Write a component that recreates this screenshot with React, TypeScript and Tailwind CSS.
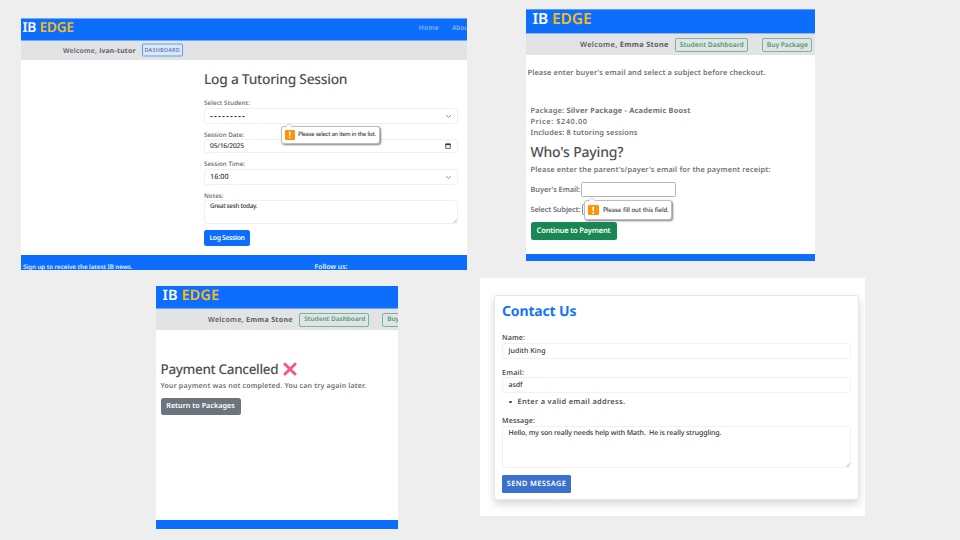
import { useLayoutEffect, useRef, useState, type ReactNode } from "react";

/** One line of text whose tracking is adjusted so that it spans `width` pixels. */
function Line({ width, className = "", children }: { width: number; className?: string; children: ReactNode }) {
  const ref = useRef<HTMLSpanElement>(null);
  const [spacing, setSpacing] = useState(0);
  useLayoutEffect(() => {
    const el = ref.current;
    if (!el) return;
    el.style.letterSpacing = "0px";
    const natural = el.getBoundingClientRect().width;
    const value = (width - natural) / Math.max(1, (el.textContent ?? "").length - 1);
    el.style.letterSpacing = `${value}px`;
    setSpacing(value);
  }, [width]);
  return (
    <span
      ref={ref}
      className={`block shrink-0 whitespace-pre [text-rendering:geometricPrecision] ${className}`}
      style={{ letterSpacing: `${spacing}px` }}
    >
      {children}
    </span>
  );
}

function Brand({ width, className }: { width: number; className: string }) {
  return (
    <Line width={width} className={`font-semibold text-white ${className}`}>
      IB <span className="text-[#f7bb16]">EDGE</span>
    </Line>
  );
}

function Chevron() {
  return (
    <svg viewBox="0 0 16 16" className="h-[5px] w-[5px]" fill="none" stroke="#55595e" strokeWidth="2.4" strokeLinecap="round" strokeLinejoin="round">
      <path d="m2 5 6 6 6-6" />
    </svg>
  );
}

function CalendarIcon() {
  return (
    <svg viewBox="0 0 12 12" className="h-[6px] w-[6px]" fill="none" stroke="#333" strokeWidth="1.5">
      <path d="M1.5 2h9v8.8h-9z" />
      <path d="M1 3h10" strokeWidth="2.6" />
      <path d="M3.5 0v2M8.5 0v2" />
    </svg>
  );
}

function Grip() {
  return (
    <svg viewBox="0 0 6 6" className="h-[4px] w-[4px]" stroke="#a5a5a5" strokeWidth="1">
      <path d="M0.5 5.5l5-5M3.2 5.7l2.5-2.5" />
    </svg>
  );
}

function Hint({ children, className, icon }: { children: ReactNode; className: string; icon: string }) {
  return (
    <div className={`absolute z-10 flex items-center rounded-[3px] border border-[#bdbdbd] bg-white shadow-[1px_1px_2px_rgba(0,0,0,0.5)] ${className}`}>
      <svg viewBox="0 0 8 5" className="absolute -top-[4px] left-[3px] h-[5px] w-[8px]">
        <path d="M0 4.5 4 .5l4 4V5H0z" fill="#fff" />
        <path d="M0 4.4 4 .5l4 3.9" fill="none" stroke="#bdbdbd" strokeWidth=".8" />
      </svg>
      <span className={`flex shrink-0 items-center justify-center rounded-[1px] bg-[#ff9207] ${icon}`}>
        <svg viewBox="0 0 10 10" className="h-full w-full" fill="#fff">
          <path d="M4.1 1.7h1.8L5.6 6H4.4zM4.2 7h1.6v1.5H4.2z" />
        </svg>
      </span>
      {children}
    </div>
  );
}

function SessionPanel() {
  const label = "text-[6.2px] leading-[8px] font-medium text-[#606366]";
  const field = "flex justify-between rounded-[2.5px] border border-[#eff0f1] text-[#303438] font-medium";
  return (
    <section className="mt-[18px] flex h-[252px] w-[446px] shrink-0 flex-col overflow-hidden bg-white">
      <header className="flex h-[23px] shrink-0 border-y border-[#70a8fd] bg-[#0d6efd] pl-[1.5px]">
        <Brand width={51.5} className="text-[13.8px] leading-[17px]" />
        <Line width={20} className="mt-[5px] ml-[345px] text-[6.6px] leading-[8px] font-semibold text-[#83b4fe]">Home</Line>
        <Line width={19} className="mt-[5px] ml-[13px] text-[6.6px] leading-[8px] font-semibold text-[#83b4fe]">About</Line>
      </header>
      <div className="flex h-[19px] shrink-0 items-center bg-[#e1e3e5] pl-[42px]">
        <Line width={72.5} className="text-[6.8px] leading-[10px] font-semibold text-[#5c6064]">
          Welcome, <b className="font-bold">ivan-tutor</b>
        </Line>
        <span className="ml-[6px] flex h-[13px] w-[41px] -translate-y-[0.5px] items-center justify-center rounded-[1.5px] border border-[#55a0fc] bg-[#dfe7f2]">
          <Line width={35.5} className="-translate-y-[0.5px] text-[5.5px] leading-[8px] font-semibold text-[#5f83cc]">DASHBOARD</Line>
        </span>
      </div>
      <main className="flex grow flex-col pr-[9px] pl-[183px]">
        <h1 className="mt-[11px] flex h-[18px] text-[#505050]">
          <Line width={143.5} className="text-[13.8px] leading-[18px] font-medium">Log a Tutoring Session</Line>
        </h1>
        <div className="mt-[10px] flex h-[9px]"><Line width={46} className={label}>Select Student:</Line></div>
        <div className={`relative h-[16px] items-center pr-[6px] pl-[5px] ${field}`}>
          <Line width={35} className="text-[9px] leading-[10px] font-semibold">---------</Line>
          <Chevron />
          <Hint className="top-[17px] left-[76px] h-[18px] w-[99px] pl-[3px]" icon="h-[9.5px] w-[9.5px]">
            <Line width={78} className="ml-[3.5px] font-['Lato',sans-serif] text-[6.1px] leading-[8px] font-medium text-[#333]">Please select an item in the list.</Line>
          </Hint>
        </div>
        <div className="mt-[7px] flex h-[8px]"><Line width={40} className={label}>Session Date:</Line></div>
        <div className={`h-[14px] items-center pr-[6px] pl-[5px] ${field}`}>
          <Line width={34} className="-translate-y-px text-[6.7px] leading-[9px]">05/16/2025</Line>
          <CalendarIcon />
        </div>
        <div className="mt-[7px] flex h-[9px]"><Line width={41} className={label}>Session Time:</Line></div>
        <div className={`h-[16px] items-center pr-[6px] pl-[5px] ${field}`}>
          <Line width={18.5} className="text-[7.2px] leading-[10px]">16:00</Line>
          <Chevron />
        </div>
        <div className="mt-[7px] flex h-[8px]"><Line width={19.5} className={label}>Notes:</Line></div>
        <div className={`h-[24px] items-end pl-[5px] ${field}`}>
          <Line width={47.5} className="self-start text-[6.3px] leading-[9px]">Great sesh today.</Line>
          <Grip />
        </div>
        <button className="mt-[6px] flex h-[16px] w-[46px] items-center justify-center rounded-[2.5px] bg-[#0d6efd] text-white">
          <Line width={35.5} className="text-[6.8px] leading-[10px] font-semibold">Log Session</Line>
        </button>
      </main>
      <footer className="flex h-[15px] shrink-0 bg-[#0d6efd] pl-[2px] text-[#e6f0ff]">
        <Line width={109.5} className="mt-[8px] text-[6.2px] leading-[8px] font-semibold">Sign up to receive the latest IB news.</Line>
        <Line width={33} className="mt-[7px] ml-[182px] text-[6.8px] leading-[10px] font-semibold">Follow us:</Line>
      </footer>
    </section>
  );
}

function CheckoutPanel() {
  const text = "translate-y-px text-[7.4px] leading-[11px] font-semibold text-[#707376]";
  const outline = "flex shrink-0 items-center justify-center rounded-[2px] border border-[#75b797] text-[#489c74]";
  return (
    <section className="mt-[9px] ml-[59px] flex h-[252px] w-[289px] shrink-0 flex-col overflow-hidden bg-white">
      <header className="flex h-[25px] shrink-0 border-t border-b border-t-[#5c9cfd] border-b-[#8bb8fb] bg-[#0d6efd] pl-[6.5px]">
        <Brand width={59} className="text-[15.4px] leading-[17px]" />
      </header>
      <div className="flex h-[21px] shrink-0 items-center bg-[#e1e3e5] pl-[54px]">
        <Line width={88.5} className="translate-y-[0.5px] text-[7.4px] leading-[11px] font-semibold text-[#5c6064]">
          Welcome, <b className="font-bold">Emma Stone</b>
        </Line>
        <span className={`ml-[6.5px] h-[14px] w-[73px] ${outline}`}>
          <Line width={64} className="text-[6.7px] leading-[9px] font-semibold">Student Dashboard</Line>
        </span>
        <span className={`ml-[14px] h-[14px] w-[50px] ${outline}`}>
          <Line width={41} className="text-[6.7px] leading-[9px] font-semibold">Buy Package</Line>
        </span>
      </div>
      <main className="flex grow flex-col pl-[4.5px]">
        <p className="mt-[12px] -ml-[3px] flex h-[11px]"><Line width={238} className={text}>Please enter buyer's email and select a subject before checkout.</Line></p>
        <div className="mt-[27px] flex h-[33px] flex-col items-start">
          <Line width={160} className={text}>Package: <b className="font-bold">Silver Package - Academic Boost</b></Line>
          <Line width={56.5} className={text}>Price: $240.00</Line>
          <Line width={107} className={text}>Includes: 8 tutoring sessions</Line>
        </div>
        <h2 className="mt-[5px] flex h-[18px] text-[#505050]"><Line width={93} className="translate-y-px text-[14px] leading-[18px] font-medium">Who's Paying?</Line></h2>
        <p className="mt-[3px] flex h-[11px]"><Line width={240} className={text}>Please enter the parent's/payer's email for the payment receipt:</Line></p>
        <div className="mt-[7px] flex h-[15px] items-center">
          <Line width={49.5} className={text}>Buyer's Email:</Line>
          <div className="relative ml-px h-[15px] w-[95px] rounded-[1.5px] border border-[#b3b3b3] bg-white">
            <Hint className="top-[17px] left-[2px] h-[20px] w-[88.5px] pl-[3.5px]" icon="h-[10.5px] w-[10.5px]">
              <Line width={65.5} className="ml-[4px] font-['Lato',sans-serif] text-[6.5px] leading-[9px] font-medium text-[#333]">Please fill out this field.</Line>
            </Hint>
          </div>
        </div>
        <div className="mt-[6px] flex h-[13px] items-center">
          <Line width={50} className={text}>Select Subject:</Line>
          <span className="ml-[1.5px] h-[11px] w-[30px] rounded-[1.5px] border border-[#888] bg-white" />
        </div>
        <button className="mt-[6px] flex h-[18px] w-[86px] items-center justify-center rounded-[2.5px] bg-[#198754] text-white">
          <Line width={74} className="text-[7.6px] leading-[11px] font-semibold">Continue to Payment</Line>
        </button>
      </main>
      <footer className="h-[7px] shrink-0 bg-[#0d6efd]" />
    </section>
  );
}

function CancelledPanel() {
  const outline = "flex shrink-0 items-center rounded-[2px] border border-[#75b797] pl-[4px] text-[#489c74]";
  return (
    <section className="mt-[8px] ml-[156px] flex h-[243px] w-[242px] shrink-0 flex-col overflow-hidden bg-white">
      <header className="flex h-[23px] shrink-0 border-b border-[#6da5fb] bg-[#0d6efd] pl-[6.5px]">
        <Brand width={56.5} className="text-[14.5px] leading-[18px]" />
      </header>
      <div className="flex h-[21px] shrink-0 items-center bg-[#e1e3e5] pl-[52px]">
        <Line width={84.5} className="translate-y-[0.5px] text-[7.1px] leading-[11px] font-semibold text-[#5c6064]">
          Welcome, <b className="font-bold">Emma Stone</b>
        </Line>
        <span className={`ml-[6.5px] h-[14px] w-[70px] ${outline}`}>
          <Line width={61} className="-translate-y-px text-[6.4px] leading-[9px] font-semibold">Student Dashboard</Line>
        </span>
        <span className={`ml-[13px] h-[14px] w-[48px] ${outline}`}>
          <Line width={39} className="-translate-y-px text-[6.4px] leading-[9px] font-semibold">Buy Package</Line>
        </span>
      </div>
      <main className="flex grow flex-col pl-[4.5px]">
        <h2 className="mt-[29px] flex h-[20px] items-center text-[#505050]">
          <Line width={118} className="text-[13.5px] leading-[20px] font-medium">Payment Cancelled</Line>
          <svg viewBox="0 0 14 14" className="ml-[4.5px] h-[14px] w-[14px]" stroke="#f8587c" strokeWidth="3" strokeLinecap="round">
            <path d="m2 2.2 10 9.8M12 2.2 2 12" />
          </svg>
        </h2>
        <p className="mt-[2px] flex h-[11px]"><Line width={205.5} className="text-[7px] leading-[11px] font-semibold text-[#6c6f72]">Your payment was not completed. You can try again later.</Line></p>
        <button className="mt-[6px] flex h-[17px] w-[80px] items-center justify-center rounded-[2.5px] bg-[#6c757d] text-white">
          <Line width={68.5} className="text-[7.2px] leading-[11px] font-semibold">Return to Packages</Line>
        </button>
      </main>
      <footer className="h-[9px] shrink-0 bg-[#0d6efd]" />
    </section>
  );
}

function ContactPanel() {
  const label = "translate-y-px text-[7.1px] leading-[10px] font-semibold text-[#4d5155]";
  const field = "flex rounded-[2.5px] border border-[#f0f1f2] pl-[5.5px] text-[#303438]";
  const value = "translate-y-px text-[7px] leading-[10px] font-medium";
  return (
    <section className="ml-[82px] flex h-[238px] w-[385px] shrink-0 overflow-hidden bg-white pt-[17px] pl-[14px]">
      <div className="flex h-[205px] w-[365px] flex-col rounded-[3px] border border-[#e7e7e8] bg-white pr-[7.5px] pl-[7px] shadow-[0_4px_9px_rgba(0,0,0,0.16)]">
        <h2 className="mt-[6px] flex h-[20px] text-[#1474fd]"><Line width={74.5} className="text-[14px] leading-[20px] font-bold">Contact Us</Line></h2>
        <div className="mt-[10px] flex h-[11px]"><Line width={23} className={label}>Name:</Line></div>
        <div className={`h-[16px] items-center ${field}`}><Line width={37} className={value}>Judith King</Line></div>
        <div className="mt-[8px] flex h-[10px]"><Line width={22} className={label}>Email:</Line></div>
        <div className={`h-[16px] items-center ${field}`}><Line width={14} className={value}>asdf</Line></div>
        <div className="mt-[4px] flex h-[10px] items-center pl-[7px]">
          <span className="mr-[6px] h-[2.5px] w-[2.5px] rounded-full bg-[#45494d]" />
          <Line width={107.5} className="text-[7.4px] leading-[10px] font-semibold text-[#4d5155]">Enter a valid email address.</Line>
        </div>
        <div className="mt-[8px] flex h-[11px]"><Line width={33} className={label}>Message:</Line></div>
        <div className={`h-[42px] items-end justify-between ${field}`}>
          <Line width={213} className={`mt-px self-start ${value}`}>Hello, my son really needs help with Math.  He is really struggling.</Line>
          <Grip />
        </div>
        <button className="mt-[7px] flex h-[18px] w-[69px] items-center justify-center rounded-[1.5px] bg-[#3b71ca] text-white">
          <Line width={59} className="text-[7.4px] leading-[11px] font-semibold">SEND MESSAGE</Line>
        </button>
      </div>
    </section>
  );
}

export default function App() {
  return (
    <div className="h-[540px] w-[960px] overflow-hidden bg-[#eeeeee] font-['Noto_Sans','Open_Sans',sans-serif]">
      <div className="flex h-[278px] items-start pl-[21px]">
        <SessionPanel />
        <CheckoutPanel />
      </div>
      <div className="flex h-[262px] items-start">
        <CancelledPanel />
        <ContactPanel />
      </div>
    </div>
  );
}
